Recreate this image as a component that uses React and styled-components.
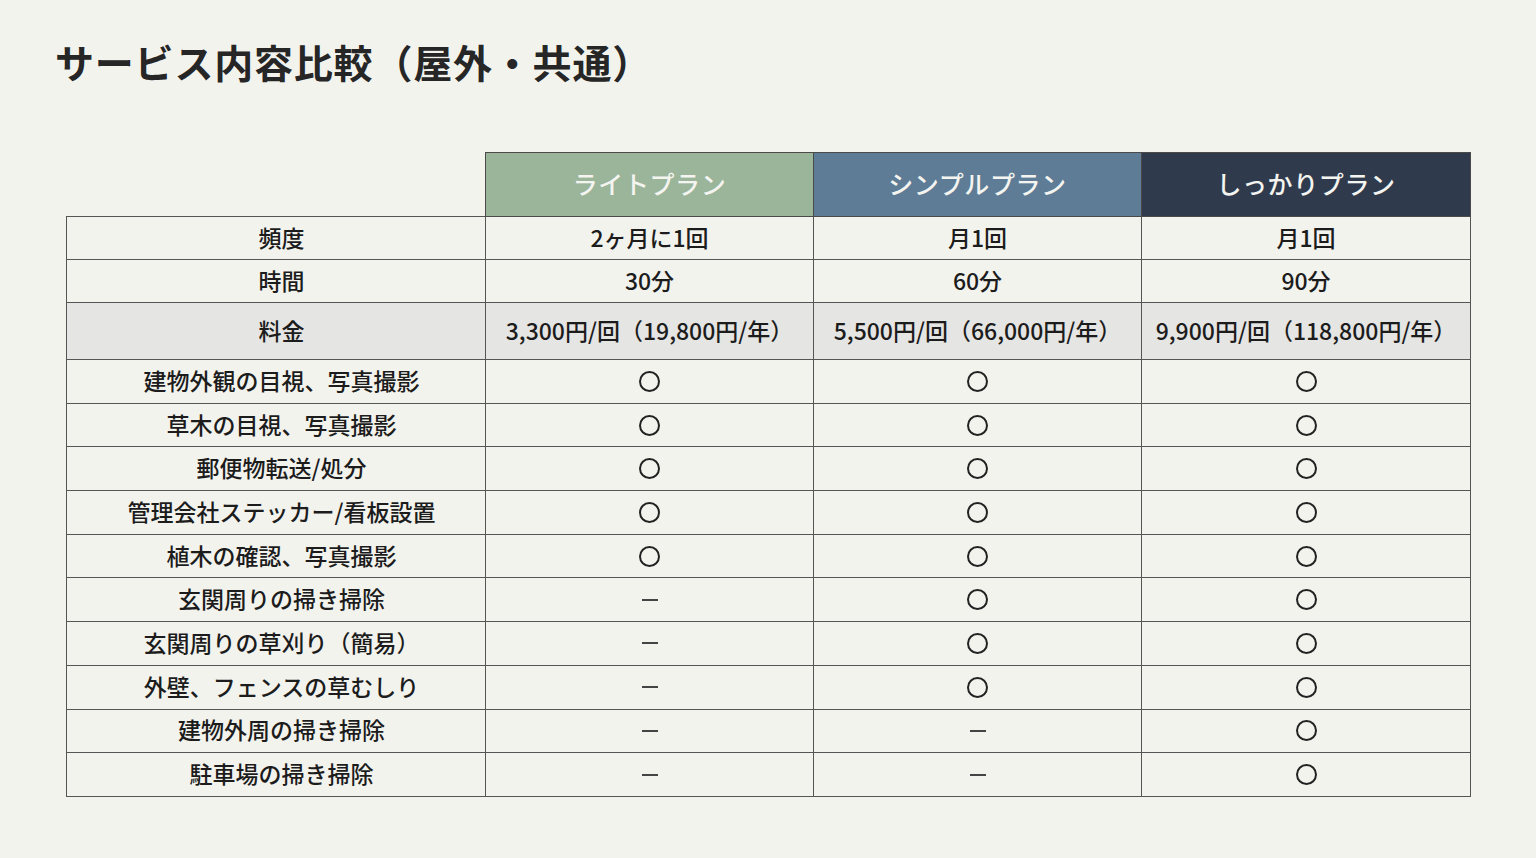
import React from "react";
import styled, { createGlobalStyle } from "styled-components";

const Global = createGlobalStyle`
  html, body { margin: 0; padding: 0; }
  body {
    background: #f3f3ee;
    font-family: "Noto Sans CJK JP", "Noto Sans", sans-serif;
    color: #1c1c1c;
  }
`;

const Page = styled.div`
  width: 1536px;
  height: 858px;
  box-sizing: border-box;
  padding: 35px 66px 0 55px;
  overflow: hidden;
`;

const Title = styled.h1`
  margin: 0;
  font-size: 39px;
  line-height: 52px;
  font-weight: 700;
  color: #262626;
  letter-spacing: 0.8px;
`;

const Table = styled.table`
  margin-top: 65px;
  margin-left: 11px;
  width: 1404px;
  border-collapse: collapse;
  table-layout: fixed;
`;

const Th = styled.th`
  height: 64px;
  padding: 0 0 4px;
  box-sizing: border-box;
  font-size: 25px;
  font-weight: 500;
  color: #f4f4f0;
  background: ${(p) => p.$bg};
  border: 1px solid #4a4a4a;
  letter-spacing: 0.6px;
`;

const Blank = styled.th`
  border: none;
  background: transparent;
  padding: 0;
`;

const Row = styled.tr`
  background: ${(p) => (p.$shade ? "#e5e5e3" : "transparent")};
`;

const Td = styled.td`
  height: ${(p) => p.$h}px;
  box-sizing: border-box;
  padding: 0 0 ${(p) => (p.$mark ? "0" : "3px")} ${(p) => (p.$label ? "11px" : "0")};
  text-align: center;
  vertical-align: middle;
  font-size: 23px;
  font-weight: 500;
  border: 1px solid #555;
  white-space: nowrap;
`;

const Mark = styled.span`
  display: block;
  margin: 0 auto;
  ${(p) =>
    p.$kind === "o"
      ? `width: 17px; height: 17px; border: 2px solid #222; border-radius: 50%;`
      : `width: 16px; height: 2px; background: #444;`}
`;

const plans = [
  { name: "ライトプラン", bg: "#9ab59a" },
  { name: "シンプルプラン", bg: "#5e7c96" },
  { name: "しっかりプラン", bg: "#2f3b4d" },
];

const basic = [
  ["頻度", "2ヶ月に1回", "月1回", "月1回"],
  ["時間", "30分", "60分", "90分"],
];

const fee = ["料金", "3,300円/回（19,800円/年）", "5,500円/回（66,000円/年）", "9,900円/回（118,800円/年）"];

const services = [
  ["建物外観の目視、写真撮影", "o", "o", "o"],
  ["草木の目視、写真撮影", "o", "o", "o"],
  ["郵便物転送/処分", "o", "o", "o"],
  ["管理会社ステッカー/看板設置", "o", "o", "o"],
  ["植木の確認、写真撮影", "o", "o", "o"],
  ["玄関周りの掃き掃除", "-", "o", "o"],
  ["玄関周りの草刈り（簡易）", "-", "o", "o"],
  ["外壁、フェンスの草むしり", "-", "o", "o"],
  ["建物外周の掃き掃除", "-", "-", "o"],
  ["駐車場の掃き掃除", "-", "-", "o"],
];

export default function App() {
  return (
    <Page>
      <Global />
      <Title>サービス内容比較（屋外・共通）</Title>
      <Table>
        <colgroup>
          <col style={{ width: "419px" }} />
          <col style={{ width: "328px" }} />
          <col style={{ width: "328px" }} />
          <col style={{ width: "329px" }} />
        </colgroup>
        <thead>
          <tr>
            <Blank />
            {plans.map((p) => (
              <Th key={p.name} $bg={p.bg}>{p.name}</Th>
            ))}
          </tr>
        </thead>
        <tbody>
          {basic.map((r) => (
            <Row key={r[0]}>
              {r.map((c, i) => (
                <Td key={i} $h={43} $label={i === 0}>{c}</Td>
              ))}
            </Row>
          ))}
          <Row $shade>
            {fee.map((c, i) => (
              <Td key={i} $h={57} $label={i === 0}>{c}</Td>
            ))}
          </Row>
          {services.map((r) => (
            <Row key={r[0]}>
              <Td $h={43.7} $label>{r[0]}</Td>
              {r.slice(1).map((m, i) => (
                <Td key={i} $h={43.7} $mark>
                  <Mark $kind={m} aria-label={m === "o" ? "○" : "－"} />
                </Td>
              ))}
            </Row>
          ))}
        </tbody>
      </Table>
    </Page>
  );
}
